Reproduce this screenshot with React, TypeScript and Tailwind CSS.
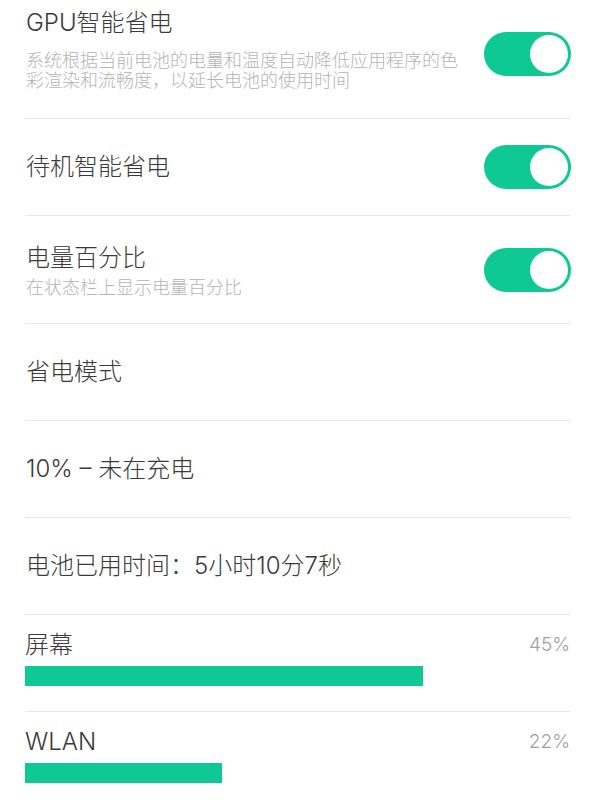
const font = "font-['Inter','Noto_Sans_CJK_SC',sans-serif]";

function Toggle({ className = "" }: { className?: string }) {
  return (
    <div
      className={`flex h-[44px] w-[87px] shrink-0 items-center justify-end rounded-full bg-[#0fc994] pr-[3px] ${className}`}
    >
      <div className="h-[38px] w-[38px] rounded-full bg-white" />
    </div>
  );
}

function UsageRow({
  name,
  pct,
  width,
  last,
}: {
  name: string;
  pct: string;
  width: number;
  last?: boolean;
}) {
  return (
    <div
      className={`flex h-[97px] flex-col pt-[14px] ${last ? "" : "border-b border-[#e8e8e8]"}`}
    >
      <div className="flex items-center justify-between">
        <span className="text-[24px] leading-[32px] text-[#3a3a3a]">{name}</span>
        <span className="pr-[1px] text-[19px] leading-[32px] text-[#a0a0a0]">{pct}</span>
      </div>
      <div className="mt-[5px] h-[20px] bg-[#0fc994]" style={{ width }} />
    </div>
  );
}

export default function App() {
  return (
    <div className={`h-[800px] w-[596px] overflow-hidden bg-white ${font} font-light`}>
      <div className="mx-[25px] w-[546px]">
        <div className="flex h-[119px] items-start justify-between border-b border-[#e8e8e8]">
          <div className="pl-[1px] pt-[7px]">
            <div className="text-[24px] leading-[32px] text-[#3a3a3a]">GPU智能省电</div>
            <div className="mt-[12px] w-[445px] text-[18px] leading-[20px] text-[#b4b4b4]">
              系统根据当前电池的电量和温度自动降低应用程序的色彩渲染和流畅度，以延长电池的使用时间
            </div>
          </div>
          <Toggle className="mt-[32px]" />
        </div>

        <div className="flex h-[97px] items-center justify-between border-b border-[#e8e8e8] pl-[1px]">
          <span className="text-[24px] leading-[32px] text-[#3a3a3a]">待机智能省电</span>
          <Toggle />
        </div>

        <div className="flex h-[108px] items-center justify-between border-b border-[#e8e8e8] pl-[1px]">
          <div>
            <div className="text-[24px] leading-[32px] text-[#3a3a3a]">电量百分比</div>
            <div className="mt-[4px] text-[18px] leading-[20px] text-[#b4b4b4]">
              在状态栏上显示电量百分比
            </div>
          </div>
          <Toggle />
        </div>

        <div className="flex h-[97px] items-center border-b border-[#e8e8e8] pl-[1px]">
          <span className="text-[24px] leading-[32px] text-[#3a3a3a]">省电模式</span>
        </div>

        <div className="flex h-[97px] items-center border-b border-[#e8e8e8] pl-[1px]">
          <span className="text-[24px] leading-[32px] text-[#3a3a3a]">10% – 未在充电</span>
        </div>

        <div className="flex h-[97px] items-center border-b border-[#e8e8e8] pl-[1px]">
          <span className="text-[24px] leading-[32px] text-[#3a3a3a]">电池已用时间：5小时10分7秒</span>
        </div>

        <UsageRow name="屏幕" pct="45%" width={398} />
        <UsageRow name="WLAN" pct="22%" width={197} last />
      </div>
    </div>
  );
}
